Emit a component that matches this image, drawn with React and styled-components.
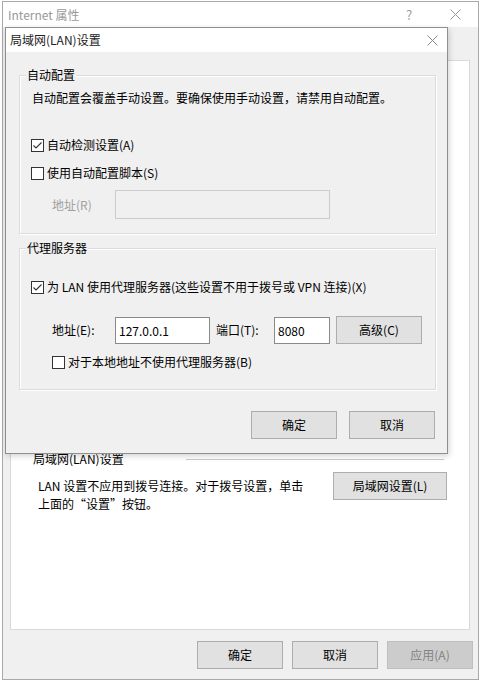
import React from "react";
import styled, { createGlobalStyle } from "styled-components";

const GlobalStyle = createGlobalStyle`
  body {
    margin: 0;
    background: #ffffff;
    font-family: "Microsoft YaHei UI", "Noto Sans CJK SC", sans-serif;
    font-size: 12px;
    color: #000;
  }
`

const Window = styled.div`
  position: relative;
  box-sizing: border-box;
  width: 477px;
  height: 679px;
  margin: 1px 0 0 2px;
  border: 1px solid #a9a9a9;
  background: #f0f0f0;
  display: flex;
  flex-direction: column;
`
const TitleBar = styled.div`
  display: flex;
  align-items: center;
  height: ${p => p.$h}px;
  background: #fff;
  flex: none;
`
const Title = styled.div`
  flex: 1;
  padding-left: ${p => p.$pl}px;
  line-height: 16px;
  color: ${p => p.$color};
`
const CapButton = styled.div`
  width: ${p => p.$w}px;
  height: 100%;
  display: flex;
  align-items: center;
  justify-content: center;
  color: #9a9a9a;
  font-size: 13px;
`
const TabStrip = styled.div`
  height: 33px;
  flex: none;
`
const TabPanel = styled.div`
  box-sizing: border-box;
  height: 570px;
  margin: 0 8px 0 7px;
  border: 1px solid #d9d9d9;
  background: #fff;
  display: flex;
  flex-direction: column;
`
const ButtonRow = styled.div`
  display: flex;
  justify-content: flex-end;
  gap: ${p => p.$gap}px;
  margin-top: ${p => p.$mt}px;
  padding-right: ${p => p.$pr}px;
`
const Button = styled.button`
  box-sizing: border-box;
  width: ${p => p.$w || 86}px;
  height: ${p => p.$h || 28}px;
  margin: 0;
  padding: 0;
  font: inherit;
  line-height: 16px;
  background: ${p => (p.disabled ? "#cccccc" : "#e1e1e1")};
  border: 1px solid ${p => (p.disabled ? "#bfbfbf" : "#adadad")};
  color: ${p => (p.disabled ? "#838383" : "#000")};
  flex: none;
`
const LanSection = styled.div`
  margin-top: 390px;
  display: flex;
  flex-direction: column;
`
const SectionHead = styled.div`
  display: flex;
  align-items: center;
  height: 16px;
  line-height: 16px;
`
const SectionLabel = styled.span`
  margin-left: 22px;
`
const Rule = styled.div`
  width: 258px;
  margin-left: auto;
  margin-right: 25px;
  border-top: 1px solid #c9c9c9;
`
const SectionBody = styled.div`
  display: flex;
  align-items: flex-start;
  margin-top: 5px;
`
const Note = styled.div`
  margin: 5px 0 0 27px;
  line-height: 18px;
`
const Dialog = styled.div`
  position: absolute;
  left: 2px;
  top: 25px;
  box-sizing: border-box;
  width: 443px;
  height: 427px;
  border: 1px solid #8f8f8f;
  background: #f0f0f0;
  box-shadow: 1px 2px 6px rgba(0, 0, 0, 0.18);
  display: flex;
  flex-direction: column;
`
const DialogBody = styled.div`
  display: flex;
  flex-direction: column;
  padding: 0 11px 0 13px;
`
const Group = styled.div`
  position: relative;
  box-sizing: border-box;
  margin-top: ${p => p.$mt}px;
  padding-bottom: ${p => p.$pb}px;
  border: 1px solid #dcdcdc;
  box-shadow: inset 1px 1px 0 #fff, 1px 1px 0 #fff;
  display: flex;
  flex-direction: column;
`
const Legend = styled.span`
  position: absolute;
  top: -9px;
  left: 6px;
  padding: 0 1px;
  line-height: 16px;
  background: #f0f0f0;
`
const Text = styled.div`
  margin: ${p => p.$mt}px 0 0 ${p => p.$ml}px;
  line-height: 16px;
  color: ${p => p.$color || "#000"};
`
const CheckRow = styled.label`
  display: flex;
  align-items: center;
  gap: 3px;
  height: 16px;
  margin: ${p => p.$mt}px 0 0 ${p => p.$ml}px;
  line-height: 16px;
`
const Box = styled.span`
  box-sizing: border-box;
  width: 13px;
  height: 13px;
  border: 1px solid #333;
  background: #fff;
  display: flex;
  align-items: center;
  justify-content: center;
  flex: none;
`
const FieldRow = styled.div`
  display: flex;
  align-items: center;
  height: ${p => p.$h}px;
  margin: ${p => p.$mt}px 0 0 32px;
`
const FieldLabel = styled.span`
  width: ${p => p.$w}px;
  margin-left: ${p => p.$ml || 0}px;
  flex: none;
  line-height: 16px;
  color: ${p => (p.$disabled ? "#a0a0a0" : "#000")};
`
const Field = styled.input`
  box-sizing: border-box;
  width: ${p => p.$w}px;
  height: ${p => p.$h}px;
  margin: 0;
  padding: 0 3px;
  font: inherit;
  color: #000;
  border: 1px solid ${p => (p.disabled ? "#cccccc" : "#8a8a8a")};
  background: ${p => (p.disabled ? "#f0f0f0" : "#fff")};
  outline: none;
  flex: none;
`

function CloseGlyph({ color }) {
  return (
    <svg width="11" height="11" viewBox="0 0 11 11">
      <path d="M0.5 0.5L10.5 10.5M10.5 0.5L0.5 10.5" stroke={color} strokeWidth="1" fill="none" />
    </svg>
  )
}

function Check({ checked, children, mt, ml }) {
  return (
    <CheckRow $mt={mt} $ml={ml}>
      <Box>
        {checked && (
          <svg width="11" height="11" viewBox="0 0 11 11">
            <path d="M1.5 5.5L4 8L9.5 2.5" stroke="#333" strokeWidth="1.1" fill="none" />
          </svg>
        )}
      </Box>
      <span>{children}</span>
    </CheckRow>
  )
}

function LanDialog() {
  return (
    <Dialog>
      <TitleBar $h={24}>
        <Title $pl={4} $color="#222">局域网(LAN)设置</Title>
        <CapButton $w={30}><CloseGlyph color="#8a8a8a" /></CapButton>
      </TitleBar>
      <DialogBody>
        <Group $mt={23} $pb={14}>
          <Legend>自动配置</Legend>
          <Text $mt={14} $ml={12}>自动配置会覆盖手动设置。要确保使用手动设置，请禁用自动配置。</Text>
          <Check checked mt={31} ml={11}>自动检测设置(A)</Check>
          <Check mt={12} ml={11}>使用自动配置脚本(S)</Check>
          <FieldRow $h={29} $mt={9}>
            <FieldLabel $w={63} $disabled>地址(R)</FieldLabel>
            <Field $w={215} $h={29} disabled readOnly defaultValue="" />
          </FieldRow>
        </Group>
        <Group $mt={14} $pb={19}>
          <Legend>代理服务器</Legend>
          <Check checked mt={30} ml={11}>为 LAN 使用代理服务器(这些设置不用于拨号或 VPN 连接)(X)</Check>
          <FieldRow $h={28} $mt={21}>
            <FieldLabel $w={63}>地址(E):</FieldLabel>
            <Field $w={95} $h={27} readOnly defaultValue="127.0.0.1" />
            <FieldLabel $w={58} $ml={6}>端口(T):</FieldLabel>
            <Field $w={56} $h={27} readOnly defaultValue="8080" />
            <Button $w={86} $h={28} style={{ marginLeft: 6 }}>高级(C)</Button>
          </FieldRow>
          <Check mt={10} ml={32}>对于本地地址不使用代理服务器(B)</Check>
        </Group>
        <ButtonRow $gap={12} $mt={21} $pr={1}>
          <Button>确定</Button>
          <Button>取消</Button>
        </ButtonRow>
      </DialogBody>
    </Dialog>
  )
}

export default function App() {
  return (
    <>
      <GlobalStyle />
      <Window>
        <TitleBar $h={25}>
          <Title $pl={5} $color="#999">Internet 属性</Title>
          <CapButton $w={46}>?</CapButton>
          <CapButton $w={46}><CloseGlyph color="#999" /></CapButton>
        </TitleBar>
        <TabStrip />
        <TabPanel>
          <LanSection>
            <SectionHead>
              <SectionLabel>局域网(LAN)设置</SectionLabel>
              <Rule />
            </SectionHead>
            <SectionBody>
              <Note>
                LAN 设置不应用到拨号连接。对于拨号设置，单击<br />
                上面的“设置”按钮。
              </Note>
              <Button $w={114} style={{ marginLeft: "auto", marginRight: 22 }}>局域网设置(L)</Button>
            </SectionBody>
          </LanSection>
        </TabPanel>
        <ButtonRow $gap={9} $mt={11} $pr={5}>
          <Button>确定</Button>
          <Button>取消</Button>
          <Button disabled>应用(A)</Button>
        </ButtonRow>
        <LanDialog />
      </Window>
    </>
  )
}
